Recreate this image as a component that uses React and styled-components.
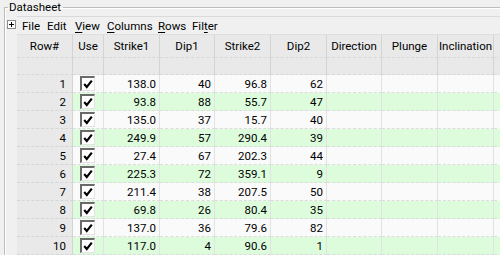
import React from "react";
import styled, { createGlobalStyle } from "styled-components";

const Global = createGlobalStyle`
  html, body { margin: 0; padding: 0; background: #f0f0f0; overflow: hidden; }
  body { font-family: Roboto, "Noto Sans", sans-serif; font-size: 11.5px; color: #000; }
`;

const Frame = styled.fieldset`
  margin: 0 0 0 4px;
  padding: 0;
  border: 1px solid #bcbcbc;
  border-right: none;
  box-shadow: inset 1px 1px 0 #fff;
  min-width: 0;
  height: 260px;
`;

const Legend = styled.legend`
  margin-left: 3px;
  padding: 0 2px 0 1px;
  font-size: 11.5px;
  line-height: 14px;
`;

const Body = styled.div`
  display: flex;
  padding-top: 2px;
`;

const Gutter = styled.div`
  width: 12px;
  flex: none;
  display: flex;
  justify-content: flex-start;
  padding-top: 4px;
  padding-left: 2px;
  box-sizing: border-box;
`;

const PlusBox = styled.div`
  width: 7px;
  height: 7px;
  border: 1px solid #8c8c8c;
  background: #fff;
  position: relative;
  &::before, &::after { content: ""; position: absolute; background: #000; }
  &::before { left: 1px; top: 3px; width: 5px; height: 1px; }
  &::after { left: 3px; top: 1px; width: 1px; height: 5px; }
`;

const Main = styled.div`
  flex: 1;
  min-width: 0;
  display: flex;
  flex-direction: column;
`;

const MenuBar = styled.div`
  height: 17px;
  display: flex;
  align-items: center;
  background: #f0f0f0;
  border-top: 1px solid #dadada;
  padding-left: 5px;
`;

const MenuItem = styled.span`
  flex: 0 0 ${(p) => p.$w}px;
  display: block;
  white-space: nowrap;
  u { text-decoration: underline; text-underline-offset: 2px; }
`;

const Table = styled.div`
  display: grid;
  grid-template-columns: 56px 31px 56px 55px 56px 56px 55px 56px 56px 20px;
  border-top: 1px solid #dedede;
`;

const HeadCell = styled.div`
  height: 22px;
  background: #e9e9e9;
  border-right: 1px solid #d4d4d4;
  border-bottom: 1px dashed #d8d8d8;
  display: flex;
  align-items: center;
  justify-content: center;
  white-space: nowrap;
  overflow: hidden;
`;

const FilterCell = styled.div`
  height: 16px;
  background: #e9e9e9;
  border-right: 1px solid #d4d4d4;
  border-bottom: 1px dashed #d8d8d8;
`;

const RowHead = styled.div`
  height: 17px;
  background: #e9e9e9;
  border-right: 1px solid #d4d4d4;
  border-bottom: 1px dashed #d6d6d6;
  display: flex;
  align-items: center;
  justify-content: flex-end;
  padding-right: 6px;
`;

const Cell = styled.div`
  height: 17px;
  background: ${(p) => (p.$alt ? "#dcfcdc" : "#fafafa")};
  border-right: 1px solid #e2e2e2;
  border-bottom: 1px dashed #dcdcdc;
  display: flex;
  align-items: center;
  justify-content: ${(p) => (p.$center ? "center" : "flex-end")};
  padding-right: ${(p) => (p.$center ? 0 : 3)}px;
`;

const Check = styled.div`
  width: 12px;
  height: 12px;
  background: #fff;
  border-top: 2px solid #6a6a6a;
  border-left: 2px solid #6a6a6a;
  border-right: 1px solid #e3e3e3;
  border-bottom: 1px solid #e3e3e3;
  display: flex;
  align-items: center;
  justify-content: center;
  margin-right: 2px;
  svg { display: block; }
`;

const rows = [
  [138.0, 40, 96.8, 62],
  [93.8, 88, 55.7, 47],
  [135.0, 37, 15.7, 40],
  [249.9, 57, 290.4, 39],
  [27.4, 67, 202.3, 44],
  [225.3, 72, 359.1, 9],
  [211.4, 38, 207.5, 50],
  [69.8, 26, 80.4, 35],
  [137.0, 36, 79.6, 82],
  [117.0, 4, 90.6, 1],
  [0, 0, 0, 0],
];

const headers = ["Row#", "Use", "Strike1", "Dip1", "Strike2", "Dip2", "Direction", "Plunge", "Inclination", ""];

const CheckMark = () => (
  <svg width="10" height="10" viewBox="0 0 10 10">
    <path d="M1.2 5 L3.8 8 L8.8 1.6" fill="none" stroke="#000" strokeWidth="2.1" />
  </svg>
);

export default function App() {
  return (
    <>
      <Global />
      <Frame>
        <Legend>Datasheet</Legend>
        <Body>
          <Gutter>
            <PlusBox />
          </Gutter>
          <Main>
            <MenuBar>
              <MenuItem $w={25}>File</MenuItem>
              <MenuItem $w={28}>Edit</MenuItem>
              <MenuItem $w={32}><u>V</u>iew</MenuItem>
              <MenuItem $w={51}><u>C</u>olumns</MenuItem>
              <MenuItem $w={34}><u>R</u>ows</MenuItem>
              <MenuItem $w={40}>Fil<u>t</u>er</MenuItem>
            </MenuBar>
            <Table>
              {headers.map((h, i) => (
                <HeadCell key={"h" + i}>{h}</HeadCell>
              ))}
              {headers.map((h, i) => (
                <FilterCell key={"f" + i} />
              ))}
              {rows.map((r, i) => {
                const alt = i % 2 === 1;
                const last = i === rows.length - 1;
                return (
                  <React.Fragment key={i}>
                    <RowHead>{last ? "" : i + 1}</RowHead>
                    <Cell $alt={alt} $center>
                      <Check>{!last && <CheckMark />}</Check>
                    </Cell>
                    <Cell $alt={alt}>{last ? "" : r[0].toFixed(1)}</Cell>
                    <Cell $alt={alt}>{last ? "" : r[1]}</Cell>
                    <Cell $alt={alt}>{last ? "" : r[2].toFixed(1)}</Cell>
                    <Cell $alt={alt}>{last ? "" : r[3]}</Cell>
                    <Cell $alt={alt} />
                    <Cell $alt={alt} />
                    <Cell $alt={alt} />
                    <Cell $alt={alt} />
                  </React.Fragment>
                );
              })}
            </Table>
          </Main>
        </Body>
      </Frame>
    </>
  );
}
